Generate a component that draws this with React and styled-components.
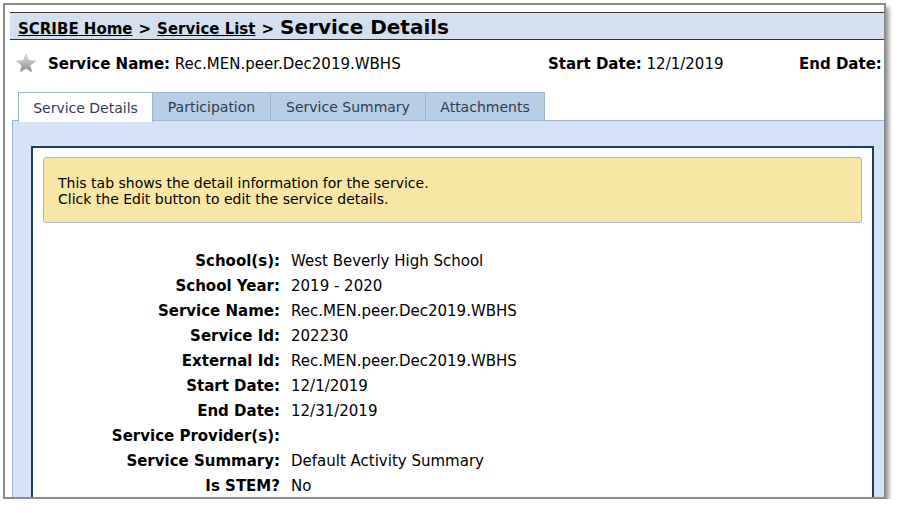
import React from "react";
import styled, { createGlobalStyle } from "styled-components";

const Global = createGlobalStyle`
  html, body { margin: 0; padding: 0; background: #fff; }
  body { font-family: "DejaVu Sans", Verdana, sans-serif; color: #000; }
`;

const Frame = styled.div`
  position: relative;
  margin: 3px 0 0 3px;
  width: 879px;
  height: 492px;
  border: 2px solid #8c8c8c;
  background: #fff;
  overflow: hidden;
  box-shadow: 3px 4px 4px rgba(0,0,0,0.4);
`;

const Page = styled.div`
  width: 900px;
  padding: 7px 0 0 5px;
`;

const Breadcrumb = styled.div`
  display: flex;
  align-items: baseline;
  gap: 6px;
  height: 28px;
  box-sizing: border-box;
  border-top: 1px solid #333;
  border-bottom: 1px solid #333;
  background: #d4e0ef;
  padding: 2px 0 0 8px;
  font-weight: bold;
  font-size: 15px;
  line-height: 24px;
`;

const Crumb = styled.a`
  color: #000;
  text-decoration: underline;
`;

const Sep = styled.span``;

const Current = styled.span`
  font-size: 20px;
`;

const InfoLine = styled.div`
  display: flex;
  align-items: center;
  height: 52px;
  box-sizing: border-box;
  padding: 0 0 4px 6px;
  font-size: 15px;
`;

const Field = styled.span`
  width: ${p => (p.$w ? `${p.$w}px` : "auto")};
  flex: none;
  white-space: nowrap;
  b { font-weight: bold; }
`;

const Tabs = styled.div`
  display: flex;
  margin-left: 8px;
  height: 29px;
  align-items: flex-end;
`;

const Tab = styled.div`
  box-sizing: border-box;
  width: ${p => p.$w}px;
  display: flex;
  align-items: center;
  justify-content: center;
  font-size: 14px;
  color: #2c3d55;
  border: 1px solid #9cb6d6;
  border-left-width: ${p => (p.$first ? 1 : 0)}px;
  border-bottom: ${p => (p.$active ? "none" : "1px solid #9cb6d6")};
  background: ${p => (p.$active ? "#fff" : "#b8cde6")};
  position: relative;
  z-index: 1;
  margin-bottom: ${p => (p.$active ? "-1px" : "0")};
  height: ${p => (p.$active ? 30 : 29)}px;
`;

const Panel = styled.div`
  width: 880px;
  box-sizing: border-box;
  margin-left: 2px;
  margin-top: -1px;
  background: #d4e3f5;
  border-left: 1px solid #9ab3d3;
  border-top: 1px solid #9ab3d3;
  padding: 25px 18px 40px 18px;
`;

const Inner = styled.div`
  background: #fff;
  border: 2px solid #1f3a5f;
  padding: 9px 10px 20px 10px;
`;

const Notice = styled.div`
  background: #f8e6a5;
  border: 1px solid #a9b7c9;
  border-radius: 3px;
  height: 66px;
  box-sizing: border-box;
  padding: 17px 14px 0 14px;
  font-size: 14px;
  line-height: 16px;
`;

const Details = styled.div`
  display: grid;
  grid-template-columns: 237px 1fr;
  column-gap: 11px;
  margin-top: 26px;
  font-size: 15px;
  line-height: 25px;
`;

const Label = styled.div`
  font-weight: bold;
  text-align: right;
  white-space: nowrap;
`;

const Value = styled.div`
  white-space: nowrap;
`;

const Star = () => (
  <svg width="20" height="19" viewBox="0 0 20 19">
    <defs>
      <linearGradient id="sg" x1="0" y1="0" x2="0" y2="1">
        <stop offset="0" stopColor="#e6e6e6" />
        <stop offset="0.6" stopColor="#ababab" />
        <stop offset="1" stopColor="#8a8a8a" />
      </linearGradient>
    </defs>
    <path d="M10 0.5 L12.6 6.6 L19.3 7.1 L14.2 11.4 L15.8 18 L10 14.5 L4.2 18 L5.8 11.4 L0.7 7.1 L7.4 6.6 Z" fill="url(#sg)" stroke="#b0b0b0" strokeWidth="0.6" />
  </svg>
);

const StarWrap = styled.span`
  display: inline-flex;
  flex: none;
  width: 32px;
  margin-top: -2px;
`;

const rows = [
  ["School(s):", "West Beverly High School"],
  ["School Year:", "2019 - 2020"],
  ["Service Name:", "Rec.MEN.peer.Dec2019.WBHS"],
  ["Service Id:", "202230"],
  ["External Id:", "Rec.MEN.peer.Dec2019.WBHS"],
  ["Start Date:", "12/1/2019"],
  ["End Date:", "12/31/2019"],
  ["Service Provider(s):", ""],
  ["Service Summary:", "Default Activity Summary"],
  ["Is STEM?", "No"],
];

export default function App() {
  return (
    <>
      <Global />
      <Frame>
        <Page>
          <Breadcrumb>
            <Crumb>SCRIBE Home</Crumb>
            <Sep>&gt;</Sep>
            <Crumb>Service List</Crumb>
            <Sep>&gt;</Sep>
            <Current>Service Details</Current>
          </Breadcrumb>
          <InfoLine>
            <StarWrap><Star /></StarWrap>
            <Field $w={500}><b>Service Name:</b> Rec.MEN.peer.Dec2019.WBHS</Field>
            <Field $w={251}><b>Start Date:</b> 12/1/2019</Field>
            <Field><b>End Date:</b></Field>
          </InfoLine>
          <Tabs>
            <Tab $active $first $w={135}>Service Details</Tab>
            <Tab $w={118}>Participation</Tab>
            <Tab $w={155}>Service Summary</Tab>
            <Tab $w={119}>Attachments</Tab>
          </Tabs>
          <Panel>
            <Inner>
              <Notice>
                This tab shows the detail information for the service.<br />
                Click the Edit button to edit the service details.
              </Notice>
              <Details>
                {rows.map(([l, v]) => (
                  <React.Fragment key={l}>
                    <Label>{l}</Label>
                    <Value>{v}</Value>
                  </React.Fragment>
                ))}
              </Details>
            </Inner>
          </Panel>
        </Page>
      </Frame>
    </>
  );
}
